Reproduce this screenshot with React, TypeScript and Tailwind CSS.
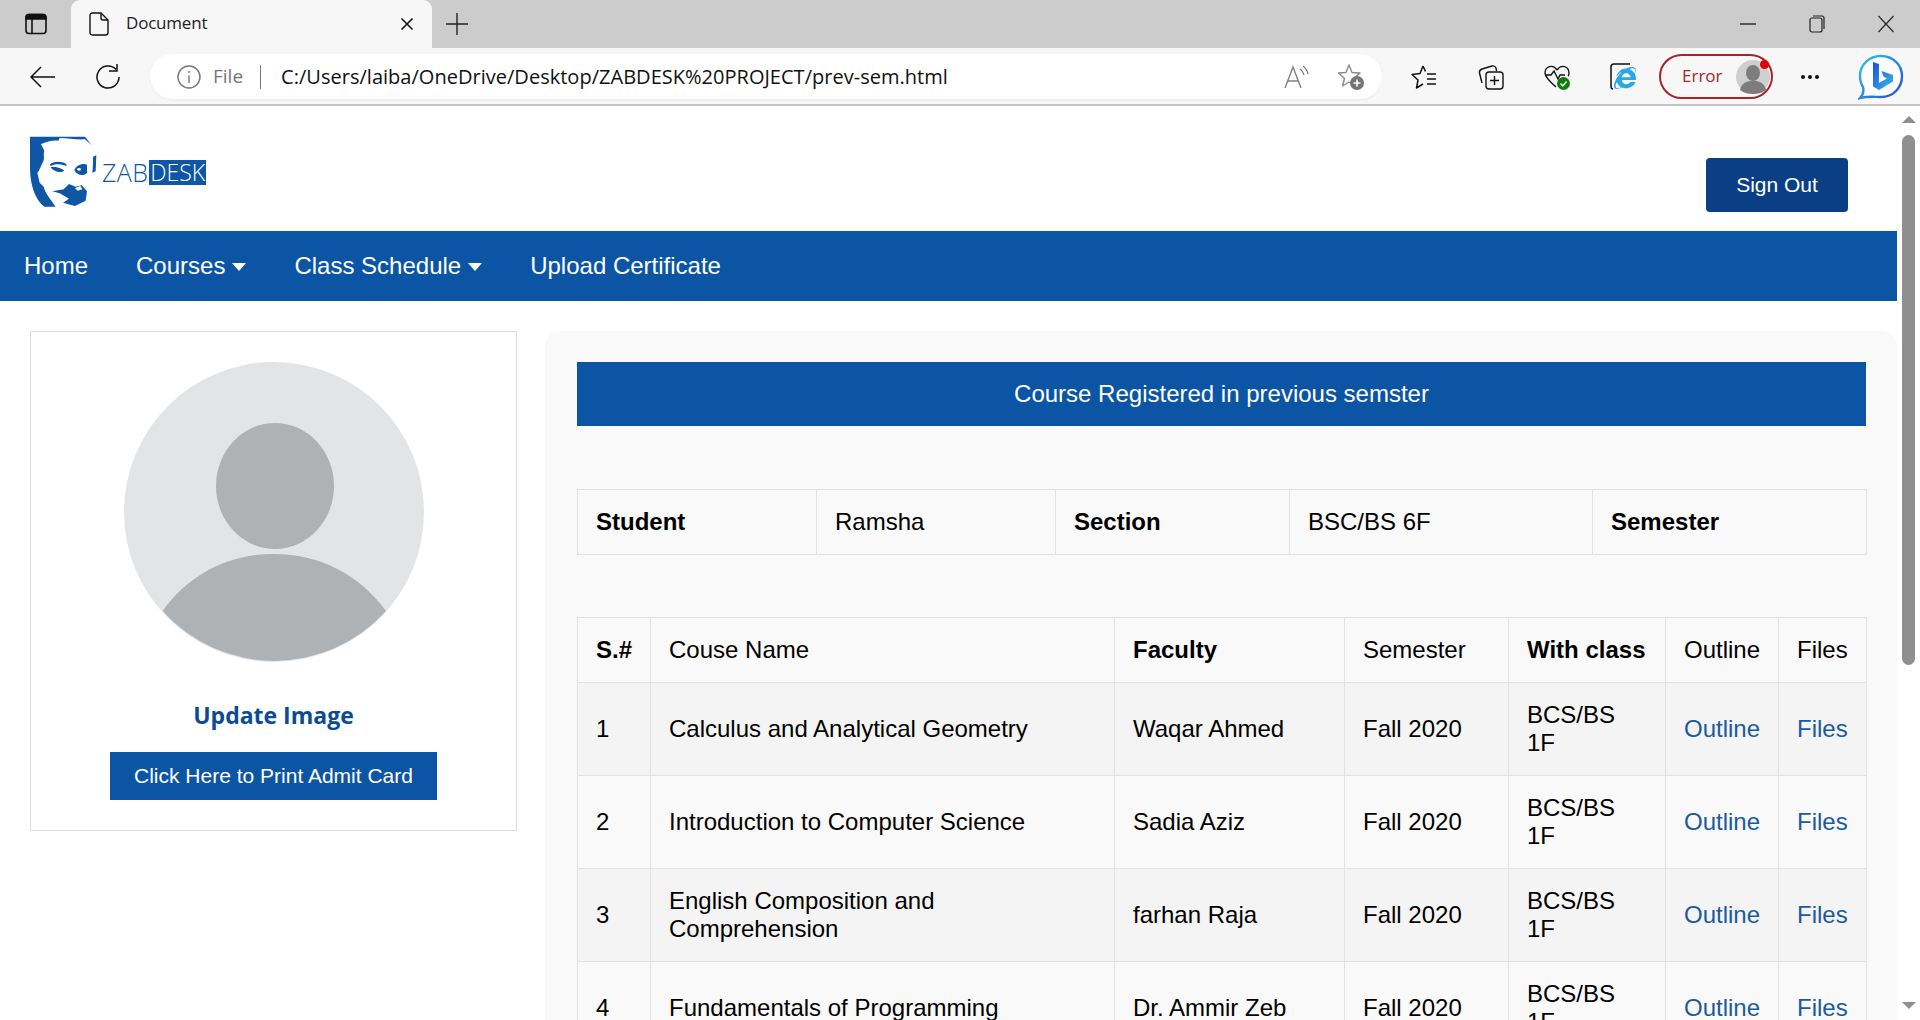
import { FaInternetExplorer } from 'react-icons/fa';

const uiFont = "font-['Open_Sans','Noto_Sans',sans-serif]";

const rows = [
  { id: 1, course: 'Calculus and Analytical Geometry', faculty: 'Waqar Ahmed' },
  { id: 2, course: 'Introduction to Computer Science', faculty: 'Sadia Aziz' },
  { id: 3, course: 'English Composition and Comprehension', faculty: 'farhan Raja' },
  { id: 4, course: 'Fundamentals of Programming', faculty: 'Dr. Ammir Zeb' },
];

const cell = 'border border-[#dee2e6] px-[18px] py-[18px] align-middle text-left font-normal leading-[28px]';

function Caret() {
  return <span className="ml-[7px] inline-block h-0 w-0 border-x-[7px] border-t-[8px] border-x-transparent border-t-white align-[3px]" />;
}

function FaceLogo() {
  return (
    <svg width="69" height="72" viewBox="30 20 207 216" fill="#0f56a6">
      {/* hair and jaw */}
      <path d="M33 22 L198 22 L218 48 L198 30 C170 32 150 26 122 26 L118 34 C100 32 82 38 66 44 L76 64 C72 76 78 86 72 98 C64 112 62 124 55 130 L62 160 L74 172 C78 190 92 206 110 232 L76 232 C50 214 34 170 33 120 Z" />
      {/* ear */}
      <path d="M222 82 L232 78 L230 126 L220 130 C222 112 222 98 222 82 Z" />
      {/* left eye and brow */}
      <path d="M92 106 C104 94 128 96 142 104 L142 110 C126 104 108 102 96 110 Z" />
      <path d="M94 114 C108 110 128 116 136 124 C124 132 106 128 94 114 Z" />
      {/* right eye */}
      <path d="M166 122 C172 106 192 100 204 106 L204 130 C196 142 172 138 166 122 Z" />
      <ellipse cx="180" cy="120" rx="6" ry="4" fill="#fff" />
      {/* mouth and chin */}
      <path d="M100 186 L134 180 L150 164 L170 172 L188 168 L204 186 L200 214 L168 230 L132 220 L150 208 L122 192 Z" />
      <path d="M168 176 L184 170 L190 180 L176 184 Z" fill="#fff" />
    </svg>
  );
}

function Avatar() {
  return (
    <svg width="300" height="300" viewBox="0 0 300 300">
      <circle cx="150" cy="150" r="150" fill="#e2e4e6" />
      <ellipse cx="151" cy="124" rx="59" ry="63" fill="#aeb2b5" />
      <path d="M38.6 249 C65 212 105 192 150 192 C195 192 235 212 262 249 A150 150 0 0 1 38.6 249 Z" fill="#aeb2b5" />
    </svg>
  );
}

function BrowserTabs() {
  return (
    <div className="flex h-[48px] bg-[#cccccc]">
      <div className="flex w-[71px] items-center justify-center">
        <svg width="22" height="22" viewBox="0 0 22 22" fill="none" stroke="#111" strokeWidth="1.6">
          <rect x="1" y="1.5" width="20" height="19" rx="3" />
          <path d="M1 5 Q1 1.5 4 1.5 L18 1.5 Q21 1.5 21 5 L21 6 L1 6 Z" fill="#111" />
          <path d="M7 6 V20" />
        </svg>
      </div>
      <div className={`flex w-[361px] items-center rounded-t-[9px] bg-[#f7f7f7] pl-[18px] ${uiFont}`}>
        <svg width="20" height="24" viewBox="0 0 20 24" fill="none" stroke="#111" strokeWidth="1.4" strokeLinejoin="round">
          <path d="M3.5 1 H12 L19 8 V20.5 Q19 23 16.5 23 H3.5 Q1 23 1 20.5 V3.5 Q1 1 3.5 1 Z" />
          <path d="M12 1 V6 Q12 8 14 8 H19" />
        </svg>
        <span className="mb-[2px] ml-[17px] text-[17px] tracking-[-0.2px] text-[#222]">Document</span>
        <svg className="ml-auto mr-[18px]" width="14" height="14" viewBox="0 0 14 14" stroke="#111" strokeWidth="1.6">
          <path d="M1.5 1.5 L12.5 12.5 M12.5 1.5 L1.5 12.5" />
        </svg>
      </div>
      <div className="flex w-[50px] items-center justify-center">
        <svg width="22" height="22" viewBox="0 0 22 22" stroke="#222" strokeWidth="1.4">
          <path d="M11 0 V22 M0 11 H22" />
        </svg>
      </div>
      <div className="ml-auto flex items-center">
        <svg className="mr-[53px]" width="16" height="2" viewBox="0 0 16 2" stroke="#222" strokeWidth="1.4"><path d="M0 1 H16" /></svg>
        <svg className="mr-[53px]" width="16" height="18" viewBox="0 0 16 18" fill="none" stroke="#222" strokeWidth="1.2">
          <rect x="1" y="3" width="12" height="14" rx="2" />
          <path d="M4 1 H13 Q15 1 15 3 V14" />
        </svg>
        <svg className="mr-[26px]" width="16" height="18" viewBox="0 0 16 18" stroke="#222" strokeWidth="1.1"><path d="M0.5 1 L15.5 17 M15.5 1 L0.5 17" /></svg>
      </div>
    </div>
  );
}

function BrowserToolbar() {
  return (
    <div className={`flex h-[58px] items-start border-b-2 border-[#c4c4c4] bg-[#f7f7f7] pt-[6px] ${uiFont}`}>
      <div className="flex h-[45px] w-[150px] shrink-0 items-center">
        <svg className="ml-[30px]" width="25" height="22" viewBox="0 0 25 22" fill="none" stroke="#111" strokeWidth="1.5">
          <path d="M25 11 H1 M11 1 L1 11 L11 21" />
        </svg>
        <svg className="ml-[40px]" width="26" height="26" viewBox="0 0 26 26" fill="none" stroke="#111" strokeWidth="1.5">
          <path d="M21 5.5 A11 11 0 1 0 24 13" />
          <path d="M14 6 H22 V-1" transform="translate(0 1)" />
        </svg>
      </div>
      <div className="flex h-[45px] w-[1232px] shrink-0 items-center rounded-full bg-white pl-[27px] shadow-[0_1px_3px_rgba(0,0,0,0.06)]">
        <svg width="24" height="24" viewBox="0 0 24 24" fill="none" stroke="#777" strokeWidth="1.4">
          <circle cx="12" cy="12" r="11" />
          <path d="M12 10.5 V18 M12 6 V8" />
        </svg>
        <span className="ml-[12px] text-[19px] text-[#767676]">File</span>
        <span className="ml-[17px] h-[24px] w-[1px] bg-[#777]" />
        <span className="ml-[20px] text-[20px] tracking-[0.02px] text-[#111]">C:/Users/laiba/OneDrive/Desktop/ZABDESK%20PROJECT/prev-sem.html</span>
        <svg className="ml-auto" width="26" height="26" viewBox="0 0 26 26" fill="none" stroke="#808080" strokeWidth="1.4">
          <path d="M1 24 L9 3 L17 24 M4 17 H14" />
          <path d="M16 5 Q19 7 20 11 M19 2 Q23 5 24 10" />
        </svg>
        <svg className="ml-[27px] mr-[17px]" width="28" height="28" viewBox="0 0 28 28" fill="none">
          <path d="M12 2 L15 9.5 L23 10 L17 15.5 L19 23 L12 19 L5.5 23 L7.5 15.5 L1.5 10 L9 9.5 Z" stroke="#8a8a8a" strokeWidth="1.4" strokeLinejoin="round" />
          <circle cx="20" cy="20" r="7" fill="#757575" />
          <path d="M20 16.5 V23.5 M16.5 20 H23.5" stroke="#fff" strokeWidth="1.6" />
        </svg>
      </div>
      <div className="flex h-[45px] items-center">
        <svg className="ml-[29px]" width="26" height="26" viewBox="0 0 26 26" fill="none" stroke="#111" strokeWidth="1.5" strokeLinejoin="round">
          <path d="M12 2 L9 9.5 L1 10.5 L7 16 L5.5 24 L12 20 M12 2 L14.5 7.5 M16 10 H25 M16 15 H25 M16 20 H25" />
        </svg>
        <svg className="ml-[41px]" width="26" height="26" viewBox="0 0 26 26" fill="none" stroke="#111" strokeWidth="1.4">
          <rect x="8" y="8" width="17" height="17" rx="3" />
          <path d="M16.5 12 V21 M12 16.5 H21" />
          <path d="M4 19 L1.5 9 Q1 6 4 5 L14 2 Q17 1.5 18 4 L18.5 7" />
        </svg>
        <svg className="ml-[40px]" width="26" height="26" viewBox="0 0 26 26" fill="none">
          <path d="M13 6 C9 0 1 2 1 9 C1 13 5 17 12 23" stroke="#111" strokeWidth="1.4" />
          <path d="M13 6 C17 0 25 2 25 9 C25 10 25 11 24 12" stroke="#111" strokeWidth="1.4" />
          <path d="M1 11 H7 L10 7 L14 15 L16 11 H21" stroke="#111" strokeWidth="1.4" />
          <circle cx="19.5" cy="19.5" r="6.5" fill="#107c10" />
          <path d="M16.5 19.5 L18.8 22 L22.5 17.5" stroke="#fff" strokeWidth="1.4" />
        </svg>
        <div className="relative ml-[40px] h-[27px] w-[26px]">
          <svg width="22" height="27" viewBox="0 0 22 27" fill="none" stroke="#111" strokeWidth="1.5">
            <path d="M3 26 Q1 26 1 23 V4 Q1 1 4 1 H20" />
          </svg>
          <FaInternetExplorer className="absolute left-[4px] top-[4px] text-[#2aa8e6]" size={22} />
        </div>
        <div className="relative ml-[23px] flex h-[45px] w-[114px] items-center rounded-full border-[2px] border-[#a4262c] pl-[21px]">
          <span className="mb-[2px] text-[17px] text-[#a4262c]">Error</span>
          <svg className="ml-[13px]" width="34" height="34" viewBox="0 0 34 34">
            <circle cx="17" cy="17" r="17" fill="#cfcfcf" />
            <ellipse cx="17" cy="13" rx="7" ry="8" fill="#7d7d7d" />
            <path d="M4 30 C6 22 11 21 17 21 C23 21 28 22 30 30 C26 33 21 34 17 34 C13 34 8 33 4 30 Z" fill="#7d7d7d" />
          </svg>
          <span className="absolute left-[99px] top-[4px] h-[9px] w-[9px] rounded-full bg-[#e0000b]" />
        </div>
        <div className="ml-[28px] flex w-[18px] justify-between">
          <span className="h-[4px] w-[4px] rounded-full bg-[#111]" />
          <span className="h-[4px] w-[4px] rounded-full bg-[#111]" />
          <span className="h-[4px] w-[4px] rounded-full bg-[#111]" />
        </div>
        <svg className="ml-[39px]" width="46" height="46" viewBox="0 0 46 46" fill="none">
          <defs>
            <linearGradient id="bing-ring" x1="0" y1="0" x2="1" y2="1">
              <stop offset="0" stopColor="#35c1f1" />
              <stop offset="1" stopColor="#2052cb" />
            </linearGradient>
            <linearGradient id="bing-b" x1="0" y1="0" x2="1" y2="1">
              <stop offset="0" stopColor="#1b4fd6" />
              <stop offset="1" stopColor="#36bbf0" />
            </linearGradient>
          </defs>
          <path d="M23 2 C35 2 44 11 44 22 C44 34 35 43 23 43 C16 43 10 42 2 44 C6 40 6 37 5 33 C3 30 2 26 2 22 C2 11 11 2 23 2 Z" fill="#fff" stroke="url(#bing-ring)" strokeWidth="2.4" />
          <path d="M15 8 L21 10 L21 29 L29 24.5 L25.5 22.5 L23.5 17 L35 21 L35 27.5 L21 36 L15 32.5 Z" fill="url(#bing-b)" />
        </svg>
      </div>
    </div>
  );
}

function Scrollbar() {
  return (
    <div className="flex w-[23px] shrink-0 flex-col items-center bg-white pt-[10px]">
      <span className="h-0 w-0 border-x-[7px] border-b-[7px] border-x-transparent border-b-[#8f8f8f]" />
      <span className="mt-[12px] h-[530px] w-[13px] rounded-full bg-[#8f8f8f]" />
      <span className="mt-[337px] h-0 w-0 border-x-[7px] border-t-[7px] border-x-transparent border-t-[#8f8f8f]" />
    </div>
  );
}

export default function App() {
  return (
    <div className="flex h-[1020px] w-[1920px] flex-col overflow-hidden bg-white font-['Liberation_Sans',Arial,sans-serif] text-black">
      <BrowserTabs />
      <BrowserToolbar />
      <div className="flex min-h-0 flex-1">
        <div className="w-[1897px] shrink-0">
          {/* Header */}
          <div className="flex h-[125px] items-start justify-between">
            <div className="ml-[29px] mt-[30px] flex items-center">
              <FaceLogo />
              <span className={`ml-[4px] text-[25px] leading-[25px] tracking-[0.4px] text-[#0f56a6] ${uiFont} font-light`}>ZAB</span>
              <span className={`ml-[1px] bg-[#0f56a6] px-[1px] text-[23px] leading-[25px] text-white ${uiFont} font-light`}>DESK</span>
            </div>
            <button className="mr-[49px] mt-[52px] h-[54px] w-[142px] rounded-[4px] bg-[#0b3f85] text-[21px] text-white">Sign Out</button>
          </div>

          {/* Nav */}
          <nav className="flex h-[70px] items-center gap-[48px] bg-[#0c55a5] pl-[24px] text-[24px] text-white">
            <a>Home</a>
            <a>Courses<Caret /></a>
            <a>Class Schedule<Caret /></a>
            <a>Upload Certificate</a>
          </nav>

          <div className="flex items-start pt-[30px]">
            {/* Profile card */}
            <div className="ml-[30px] flex h-[500px] w-[487px] shrink-0 flex-col items-center border border-[#dddddd] pt-[30px]">
              <Avatar />
              <div className={`mt-[37px] text-[23px] font-bold leading-[32px] text-[#0d4a96] ${uiFont}`}>Update Image</div>
              <button className="mt-[21px] h-[48px] w-[327px] bg-[#0c55a5] text-[21px] text-white">Click Here to Print Admit Card</button>
            </div>

            {/* Registered courses */}
            <div className="ml-[28px] w-[1352px] rounded-t-[16px] bg-[#f9f9f9] pb-[30px] pl-[32px] pr-[31px] pt-[31px]">
              <div className="flex h-[64px] items-center justify-center bg-[#0c55a5] text-[24px] text-white">Course Registered in previous semster</div>

              <table className="mt-[63px] w-[1289px] table-fixed border-collapse text-[24px]">
                <colgroup>
                  <col className="w-[239px]" />
                  <col className="w-[239px]" />
                  <col className="w-[234px]" />
                  <col className="w-[303px]" />
                  <col className="w-[274px]" />
                </colgroup>
                <tbody>
                  <tr>
                    <td className={`${cell} !font-bold`}>Student</td>
                    <td className={cell}>Ramsha</td>
                    <td className={`${cell} !font-bold`}>Section</td>
                    <td className={cell}>BSC/BS 6F</td>
                    <td className={`${cell} !font-bold`}>Semester</td>
                  </tr>
                </tbody>
              </table>

              <table className="mt-[62px] w-[1289px] table-fixed border-collapse text-[24px]">
                <colgroup>
                  <col className="w-[73px]" />
                  <col className="w-[464px]" />
                  <col className="w-[230px]" />
                  <col className="w-[164px]" />
                  <col className="w-[157px]" />
                  <col className="w-[113px]" />
                  <col className="w-[88px]" />
                </colgroup>
                <thead>
                  <tr>
                    <th className={`${cell} !font-bold`}>S.#</th>
                    <th className={cell}>Couse Name</th>
                    <th className={`${cell} !font-bold`}>Faculty</th>
                    <th className={cell}>Semester</th>
                    <th className={`${cell} !font-bold`}>With class</th>
                    <th className={cell}>Outline</th>
                    <th className={cell}>Files</th>
                  </tr>
                </thead>
                <tbody>
                  {rows.map((row) => (
                    <tr key={row.id} className={row.id % 2 === 1 ? 'bg-[#f4f4f4]' : ''}>
                      <td className={cell}>{row.id}</td>
                      <td className={cell}>{row.course}</td>
                      <td className={cell}>{row.faculty}</td>
                      <td className={cell}>Fall 2020</td>
                      <td className={cell}>BCS/BS 1F</td>
                      <td className={`${cell} text-[#1c5a9f]`}>Outline</td>
                      <td className={`${cell} text-[#1c5a9f]`}>Files</td>
                    </tr>
                  ))}
                </tbody>
              </table>
            </div>
          </div>
        </div>
        <Scrollbar />
      </div>
    </div>
  );
}
